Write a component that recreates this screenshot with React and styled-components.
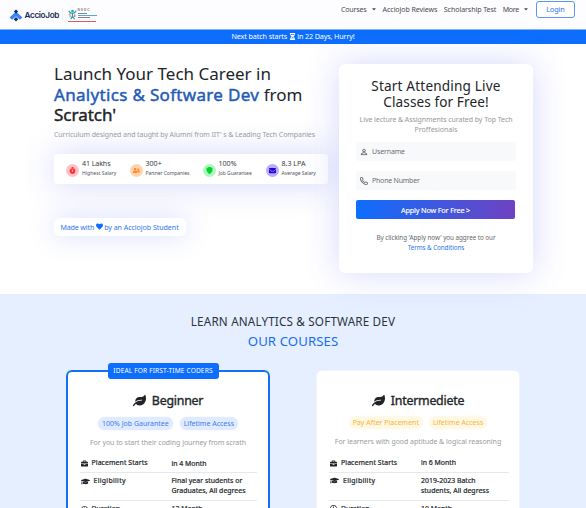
import React from "react";
import styled, { createGlobalStyle } from "styled-components";
import { FaLeaf, FaBriefcase, FaGraduationCap, FaRegClock, FaHeart, FaStopwatch, FaUserFriends, FaEnvelope, FaCaretDown, FaHourglassHalf } from "react-icons/fa";
import { BsShieldFill, BsPerson, BsTelephone } from "react-icons/bs";

const Global = createGlobalStyle`
  * { box-sizing: border-box; }
  body { margin: 0; background: #fff; color: #212529; font-family: "Noto Sans", sans-serif; overflow: hidden; }
  h1, h2, h3, p { margin: 0; font-weight: 400; }
  svg { flex: none; display: block; }
`;

const Page = styled.div`
  width: 586px;
  height: 508px;
  overflow: hidden;
`;

const Text = styled.span`
  display: ${(p) => (p.$block ? "block" : "inline")};
  white-space: nowrap;
  letter-spacing: ${(p) => p.$ls || 0}px;
`;

const Nav = styled.nav`
  height: 29px;
  display: flex;
  align-items: center;
  padding: 0 11px 0 9px;
  background: #fdfdff;
`;

const Brand = styled.div`
  display: flex;
  align-items: center;
  gap: 1.5px;
  margin-top: 1px;
  color: #14284f;
  font: 600 8.2px "Inter", sans-serif;
  letter-spacing: -0.35px;
`;

const Divider = styled.i`
  width: 1px;
  height: 15px;
  margin: 0 4.5px 0 3px;
  background: #f0f2f7;
`;

const Partner = styled.div`
  display: flex;
  flex-direction: column;
  width: 29px;
  margin-top: 1px;
`;

const PartnerTop = styled.div`
  display: flex;
  gap: 1px;
`;

const PartnerLines = styled.div`
  display: flex;
  flex-direction: column;
  font: 700 3.2px/3px "Liberation Sans", sans-serif;
  letter-spacing: 1px;
  color: #8a6d80;
`;

const Stripe = styled.i`
  height: 1px;
  margin-top: ${(p) => p.$gap || 1}px;
  width: ${(p) => p.$w}px;
  background: ${(p) => p.$c};
`;

const Links = styled.div`
  display: flex;
  align-items: center;
  margin-left: auto;
  margin-top: -11px;
  font-size: 7.1px;
  line-height: 10px;
  color: #4b4b4f;
`;

const Link = styled.a`
  display: flex;
  align-items: center;
  gap: 4px;
  margin-right: ${(p) => p.$mr}px;
`;

const Login = styled.button`
  width: 39px;
  height: 17px;
  padding: 0;
  border: 1px solid #5b96f5;
  border-radius: 3px;
  background: #fff;
  color: #2874ee;
  font: 7.2px "Noto Sans", sans-serif;
  letter-spacing: -0.1px;
`;

const Banner = styled.div`
  height: 15px;
  display: flex;
  align-items: center;
  justify-content: center;
  gap: 1.5px;
  border-top: 1px solid #7fb1ff;
  background: #0d6efd;
  color: #fff;
  font-size: 7.2px;
  line-height: 13px;
  padding-bottom: 1px;
`;

const Hero = styled.section`
  display: flex;
  height: 250px;
  padding: 20px 53px 0 54px;
  gap: 11px;
`;

const Pitch = styled.div`
  width: 274px;
`;

const Title = styled.h1`
  font-size: 17px;
  line-height: 20.6px;
`;

const Accent = styled.span`
  color: ${(p) => p.$c || "#1f5bb8"};
  letter-spacing: ${(p) => p.$ls || 0}px;
  -webkit-text-stroke: 0.45px currentColor;
`;

const Sub = styled.p`
  margin-top: 4px;
  font-size: 7px;
  line-height: 10px;
  color: #999da1;
`;

const Stats = styled.div`
  display: grid;
  grid-template-columns: 63.5px 73px 63px 60px;
  height: 30px;
  margin-top: 14px;
  padding: 4px 0 0 12px;
  border-radius: 3px;
  background: #fff;
  box-shadow: 0 0 32px rgba(80, 90, 240, 0.25);
`;

const Stat = styled.div`
  display: flex;
  gap: 3px;
  white-space: nowrap;
`;

const Bubble = styled.span`
  display: flex;
  align-items: center;
  justify-content: center;
  width: 13px;
  height: 13px;
  margin-top: 6px;
  border-radius: 50%;
  background: ${(p) => p.$bg};
  color: ${(p) => p.$fg};
  font-size: 7px;
`;

const Value = styled.div`
  font-size: 7.1px;
  line-height: 11px;
  color: #3a3d40;
`;

const Label = styled.div`
  font-size: 5.1px;
  line-height: 8px;
  color: #55585b;
`;

const Made = styled.div`
  display: flex;
  align-items: center;
  width: 132px;
  height: 18px;
  margin-top: 34px;
  padding-left: 6.5px;
  gap: 1.5px;
  border-radius: 6px;
  background: #fff;
  box-shadow: 0 0 26px rgba(90, 110, 250, 0.25);
  color: #2f77ee;
  font-size: 7.1px;
  svg { color: #0d6efd; }
`;

const Form = styled.form`
  width: 194px;
  height: 209px;
  padding: 14px 17px 0;
  border-radius: 6px;
  background: #fff;
  box-shadow: 0 0 34px rgba(80, 90, 240, 0.24);
  text-align: center;
`;

const FormTitle = styled.h2`
  font-size: 13.6px;
  line-height: 16px;
`;

const Hint = styled.p`
  margin-top: 5px;
  font-size: 7px;
  line-height: 10px;
  color: #95989b;
`;

const Field = styled.label`
  display: flex;
  align-items: center;
  height: 19px;
  margin-top: ${(p) => p.$mt}px;
  padding-left: 4px;
  gap: 4px;
  border-radius: 3px;
  background: #f8f9fa;
  color: #6b7076;
  font-size: 7px;
  svg { color: #4d5359; stroke: currentColor; stroke-width: 0.4px; }
`;

const Apply = styled.button`
  display: block;
  width: 159px;
  height: 19px;
  margin-top: 10px;
  padding: 0;
  border: 0;
  border-radius: 2px;
  background: linear-gradient(90deg, #0d6efd, #6f42c1);
  color: #fff;
  font: 7.3px "Noto Sans", sans-serif;
  letter-spacing: -0.18px;
  -webkit-text-stroke: 0.15px currentColor;
`;

const Terms = styled.p`
  margin-top: 14px;
  font-size: 6.3px;
  line-height: 10px;
  color: #64686c;
  a { color: #2874ee; }
`;

const Courses = styled.section`
  height: 214px;
  padding: 19px 66px 0;
  background: #e5efff;
  text-align: center;
`;

const Heading = styled.h2`
  font-size: ${(p) => p.$size}px;
  line-height: ${(p) => p.$lh}px;
  color: ${(p) => p.$c};
`;

const Cards = styled.div`
  display: flex;
  justify-content: space-between;
  margin-top: 17px;
`;

const Card = styled.article`
  position: relative;
  width: 204px;
  height: 210px;
  padding: ${(p) => (p.$featured ? "19px 10px" : "20px 9px")};
  border: ${(p) => (p.$featured ? "2px solid #1471f5" : "1px solid #f0f4fd")};
  border-radius: 6px;
  background: #fff;
`;

const Ribbon = styled.div`
  position: absolute;
  top: -9px;
  left: 39.5px;
  width: 111px;
  height: 16px;
  border-radius: 3px;
  background: #0d6efd;
  color: #fff;
  font-size: 6.6px;
  line-height: 16px;
`;

const Level = styled.h3`
  display: flex;
  align-items: center;
  justify-content: center;
  gap: 6px;
  height: 18px;
  font-size: 12.4px;
  -webkit-text-stroke: 0.35px currentColor;
`;

const Pills = styled.div`
  display: flex;
  justify-content: center;
  gap: ${(p) => p.$gap}px;
  margin-top: ${(p) => p.$mt}px;
  font-size: 7px;
  line-height: 13px;
`;

const Pill = styled.span`
  height: 13px;
  padding: 0 4px;
  border-radius: 7px;
  color: ${(p) => (p.$warm ? "#f9b62c" : "#3f7df0")};
  background: ${(p) => (p.$warm ? "#fff8e6" : "#e0ebff")};
  box-shadow: 0 0 2px ${(p) => (p.$warm ? "#fff8e6" : "#e0ebff")};
`;

const Blurb = styled.p`
  margin-top: 8px;
  margin-bottom: ${(p) => p.$mb}px;
  font-size: 7px;
  line-height: 10px;
  color: #999ca0;
`;

const Specs = styled.div`
  margin: 0 1px 0 ${(p) => p.$ml}px;
`;

const Row = styled.div`
  display: grid;
  grid-template-columns: 91px 1fr;
  padding: 3px 0 3.4px 1px;
  border-bottom: 1px solid #e6e9ec;
  text-align: left;
  font-size: 6.9px;
  line-height: 10.3px;
  letter-spacing: 0.05px;
  color: #212529;
  -webkit-text-stroke: 0.2px currentColor;
`;

const Key = styled.div`
  display: flex;
  align-items: center;
  height: 10px;
  gap: 4px;
`;

const Logo = () => (
  <svg width="14" height="13" viewBox="0 0 14 13">
    <path d="M7 2.5 13.5 8.5 10.8 10.8 7 7.3 3.2 10.8 .5 8.5Z" fill="#3484f5" />
    <path d="M7 .5 9.2 2.6 7 4.6 4.8 2.6ZM7 8 9.2 10.2 7 12.4 4.8 10.2Z" fill="#132b55" />
  </svg>
);

const People = () => (
  <svg width="9" height="11" viewBox="0 0 9 11" fill="none" strokeWidth="1.2">
    <circle cx="4.5" cy="2" r="1.3" fill="#29a3b8" />
    <path d="M.7 2 3 4.2 4.5 4 6 4.2 8.3 2M4.5 4V7L2.7 10.2M4.5 7 6.5 10.2" stroke="#239fb4" />
    <path d="M.6 5.5 2.8 4.6M2.1 6V8.2" stroke="#bd9c55" />
    <path d="M6.8 5.6V8" stroke="#c75f6a" />
  </svg>
);

const stats = [
  { v: "41 Lakhs", l: "Highest Salary", bg: "#ffc3c6", fg: "#ff3340", Icon: FaStopwatch, a: -0.1, b: 0 },
  { v: "300+", l: "Partner Companies", bg: "#ffd4ad", fg: "#ff8a24", Icon: FaUserFriends, a: 0, b: -0.14 },
  { v: "100%", l: "Job Guarantee", bg: "#adf9b9", fg: "#00d535", Icon: BsShieldFill, a: 0, b: -0.08 },
  { v: "8.3 LPA", l: "Average Salary", bg: "#b8adf7", fg: "#2a00dd", Icon: FaEnvelope, a: 0, b: -0.08 },
];

const cards = [
  {
    name: "Beginner", featured: true, ribbon: "IDEAL FOR FIRST-TIME CODERS",
    pills: ["100% Job Gaurantee", "Lifetime Access"], pillGap: 7,
    blurb: "For you to start their coding journey from scrath",
    start: "in 4 Month", who: ["Final year students or", "Graduates, All degrees"], time: "12 Month",
  },
  {
    name: "Intermediete",
    pills: ["Pay After Placement", "Lifetime Access"], pillGap: 6,
    blurb: "For learners with good aptitude & logical reasoning",
    start: "in 6 Month", who: ["2019-2023 Batch", "students, All degress"], time: "10 Month",
  },
];

export default function App() {
  return (
    <Page>
      <Global />
      <Nav>
        <Brand><Logo />AccioJob</Brand>
        <Divider />
        <Partner>
          <PartnerTop>
            <People />
            <PartnerLines>
              NSDC
              <Stripe $w={9} $c="#7c8795" />
              <Stripe $w={19} $c="#55adc7" />
              <Stripe $w={12} $c="#7c8795" />
            </PartnerLines>
          </PartnerTop>
          <Stripe $w={28} $c="#d75f59" />
        </Partner>
        <Links>
          <Link $mr={6}><Text $ls={-0.18}>Courses</Text><FaCaretDown size={6} /></Link>
          <Link $mr={6.5}><Text $ls={-0.1}>Acciojob Reviews</Text></Link>
          <Link $mr={6.5}><Text $ls={-0.1}>Scholarship Test</Text></Link>
          <Link $mr={7}><Text $ls={-0.3}>More</Text><FaCaretDown size={6} /></Link>
          <Login type="button">Login</Login>
        </Links>
      </Nav>
      <Banner>
        <Text $ls={-0.1}>Next batch starts</Text><FaHourglassHalf size={7} /><Text $ls={-0.13}>in 22 Days, Hurry!</Text>
      </Banner>
      <Hero>
        <Pitch>
          <Title>
            <Text $block>Launch Your Tech Career in</Text>
            <Text $block><Accent $ls={0.32}>Analytics &amp; Software Dev</Accent> from</Text>
            <Text $block><Accent $c="#212529">Scratch'</Accent></Text>
          </Title>
          <Sub><Text $ls={-0.08}>Curriculum designed and taught by Alumni from IIT' s &amp; Leading Tech Companies</Text></Sub>
          <Stats>
            {stats.map(({ v, l, bg, fg, Icon, a, b }) => (
              <Stat key={l}>
                <Bubble $bg={bg} $fg={fg}><Icon /></Bubble>
                <div>
                  <Value><Text $ls={a}>{v}</Text></Value>
                  <Label><Text $ls={b}>{l}</Text></Label>
                </div>
              </Stat>
            ))}
          </Stats>
          <Made><Text $ls={-0.15}>Made with</Text><FaHeart size={7} /><Text $ls={-0.06}>by an Acciojob Student</Text></Made>
        </Pitch>
        <Form>
          <FormTitle><Text $block $ls={0.17}>Start Attending Live</Text><Text $block $ls={0.08}>Classes for Free!</Text></FormTitle>
          <Hint><Text $block $ls={-0.06}>Live lecture &amp; Assignments curated by Top Tech</Text><Text $block>Proffesionals</Text></Hint>
          <Field $mt={7}><BsPerson size={8} /><Text $ls={-0.15}>Username</Text></Field>
          <Field $mt={10}><BsTelephone size={8} /><Text $ls={-0.22}>Phone Number</Text></Field>
          <Apply type="button">Apply Now For Free &gt;</Apply>
          <Terms><Text $block $ls={-0.04}>By clicking 'Apply now' you aggree to our</Text><a><Text $ls={-0.08}>Terms &amp; Conditions</Text></a></Terms>
        </Form>
      </Hero>
      <Courses>
        <Heading $size={11.7} $lh={17} $c="#2c333c"><Text $ls={0.17}>LEARN ANALYTICS &amp; SOFTWARE DEV</Text></Heading>
        <Heading $size={13.2} $lh={23} $c="#1a6df0"><Text $ls={0.08}>OUR COURSES</Text></Heading>
        <Cards>
          {cards.map((c) => (
            <Card key={c.name} $featured={c.featured}>
              {c.ribbon && <Ribbon><Text $ls={0.13}>{c.ribbon}</Text></Ribbon>}
              <Level><FaLeaf size={13} /><Text $ls={-0.25}>{c.name}</Text></Level>
              <Pills $gap={c.pillGap} $mt={c.featured ? 8 : 7}>
                {c.pills.map((p) => <Pill key={p} $warm={!c.featured}><Text>{p}</Text></Pill>)}
              </Pills>
              <Blurb $mb={c.featured ? 7.5 : 8}><Text $ls={-0.05}>{c.blurb}</Text></Blurb>
              <Specs $ml={c.featured ? 1.5 : 3}>
                <Row><Key><FaBriefcase size={7} /><Text $ls={0.1}>Placement Starts</Text></Key><Text>{c.start}</Text></Row>
                <Row><Key><FaGraduationCap size={9} /><Text $ls={0.3}>Eligibility</Text></Key><div>{c.who.map((w) => <Text key={w} $block $ls={0.04}>{w}</Text>)}</div></Row>
                <Row><Key><FaRegClock size={7} /><Text>Duration</Text></Key><Text>{c.time}</Text></Row>
              </Specs>
            </Card>
          ))}
        </Cards>
      </Courses>
    </Page>
  );
}
